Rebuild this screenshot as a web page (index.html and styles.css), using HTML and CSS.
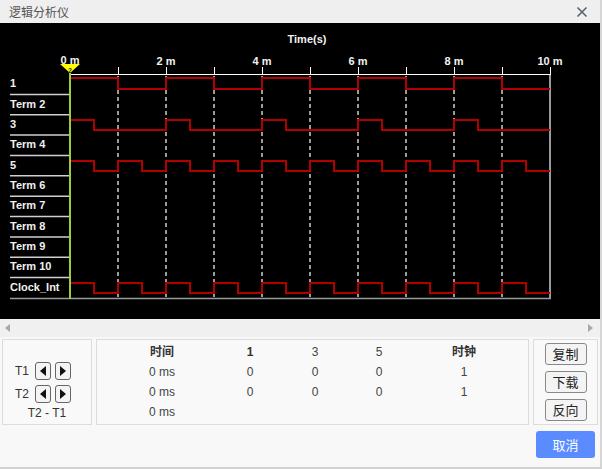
FILE: index.html
```html
<!DOCTYPE html>
<html lang="zh">
<head>
<meta charset="utf-8">
<title>逻辑分析仪</title>
<link rel="stylesheet" href="styles.css">
</head>
<body>
<div class="dialog">
  <div class="titlebar">
    <span class="title">逻辑分析仪</span>
    <svg class="close" width="12" height="12" viewBox="0 0 12 12"><path d="M1.5 1.5 L10.5 10.5 M10.5 1.5 L1.5 10.5" stroke="#5a6470" stroke-width="1.6" fill="none"/></svg>
  </div>
  <div class="scope">
    <svg class="plot" width="600" height="296" viewBox="0 23 600 296">
      <rect x="0" y="23" width="600" height="296" fill="#000"/>
      <g class="axis-text">
        <text x="307" y="43">Time(s)</text>
        <text x="166" y="65">2 m</text>
        <text x="262" y="65">4 m</text>
        <text x="358" y="65">6 m</text>
        <text x="454" y="65">8 m</text>
        <text x="550" y="65">10 m</text>
      </g>
      <line x1="70" y1="74.5" x2="551" y2="74.5" stroke="#fff" stroke-width="1.2"/>
      <g stroke="#fff" stroke-width="1">
        <line x1="118.5" y1="67" x2="118.5" y2="74"/>
        <line x1="166.5" y1="67" x2="166.5" y2="74"/>
        <line x1="214.5" y1="67" x2="214.5" y2="74"/>
        <line x1="262.5" y1="67" x2="262.5" y2="74"/>
        <line x1="310.5" y1="67" x2="310.5" y2="74"/>
        <line x1="358.5" y1="67" x2="358.5" y2="74"/>
        <line x1="406.5" y1="67" x2="406.5" y2="74"/>
        <line x1="454.5" y1="67" x2="454.5" y2="74"/>
        <line x1="502.5" y1="67" x2="502.5" y2="74"/>
        <line x1="550.5" y1="67" x2="550.5" y2="74"/>
      </g>
      <g stroke="#9a9a9a" stroke-width="2" stroke-dasharray="4 3">
        <line x1="118" y1="76" x2="118" y2="297"/>
        <line x1="166" y1="76" x2="166" y2="297"/>
        <line x1="214" y1="76" x2="214" y2="297"/>
        <line x1="262" y1="76" x2="262" y2="297"/>
        <line x1="310" y1="76" x2="310" y2="297"/>
        <line x1="358" y1="76" x2="358" y2="297"/>
        <line x1="406" y1="76" x2="406" y2="297"/>
        <line x1="454" y1="76" x2="454" y2="297"/>
        <line x1="502" y1="76" x2="502" y2="297"/>
      </g>
      <line x1="550" y1="75" x2="550" y2="299" stroke="#9a9a9a" stroke-width="2"/>
      <line x1="10" y1="298.5" x2="551" y2="298.5" stroke="#9a9a9a" stroke-width="1.5"/>
      <g stroke="#d0d0d0" stroke-width="1.5">
        <line x1="10" y1="94.4" x2="69" y2="94.4"/>
        <line x1="10" y1="114.7" x2="69" y2="114.7"/>
        <line x1="10" y1="135.1" x2="69" y2="135.1"/>
        <line x1="10" y1="155.5" x2="69" y2="155.5"/>
        <line x1="10" y1="175.8" x2="69" y2="175.8"/>
        <line x1="10" y1="196.2" x2="69" y2="196.2"/>
        <line x1="10" y1="216.5" x2="69" y2="216.5"/>
        <line x1="10" y1="236.9" x2="69" y2="236.9"/>
        <line x1="10" y1="257.3" x2="69" y2="257.3"/>
        <line x1="10" y1="277.6" x2="69" y2="277.6"/>
      </g>
      <g class="labels">
        <text x="10" y="87">1</text>
        <text x="10" y="107.5">Term 2</text>
        <text x="10" y="128">3</text>
        <text x="10" y="148">Term 4</text>
        <text x="10" y="168.5">5</text>
        <text x="10" y="189">Term 6</text>
        <text x="10" y="209">Term 7</text>
        <text x="10" y="229.5">Term 8</text>
        <text x="10" y="250">Term 9</text>
        <text x="10" y="270">Term 10</text>
        <text x="10" y="290.5">Clock_Int</text>
      </g>
      <g fill="none" stroke="#b00000" stroke-width="2">
        <polyline points="70,78 118,78 118,89 166,89 166,78 214,78 214,89 262,89 262,78 310,78 310,89 358,89 358,78 406,78 406,89 454,89 454,78 502,78 502,89 550,89"/>
        <polyline points="70,120 94,120 94,130 166,130 166,120 190,120 190,130 262,130 262,120 286,120 286,130 358,130 358,120 382,120 382,130 454,130 454,120 478,120 478,130 550,130"/>
        <polyline points="70,161 94,161 94,171 118,171 118,161 142,161 142,171 166,171 166,161 190,161 190,171 214,171 214,161 238,161 238,171 262,171 262,161 286,161 286,171 310,171 310,161 334,161 334,171 358,171 358,161 382,161 382,171 406,171 406,161 430,161 430,171 454,171 454,161 478,161 478,171 502,171 502,161 526,161 526,171 550,171"/>
        <polyline points="70,283 94,283 94,293 118,293 118,283 142,283 142,293 166,293 166,283 190,283 190,293 214,293 214,283 238,283 238,293 262,293 262,283 286,283 286,293 310,293 310,283 334,283 334,293 358,293 358,283 382,283 382,293 406,293 406,283 430,283 430,293 454,293 454,283 478,283 478,293 502,293 502,283 526,283 526,293 550,293"/>
      </g>
      <line x1="70" y1="73" x2="70" y2="299" stroke="#9ccc3c" stroke-width="2"/>
      <polygon points="60,64 80,64 70,73" fill="#ffff00"/>
      <text class="marker" x="70" y="72.5">2</text>
      <text class="axis-text-0" x="70" y="64">0 m</text>
    </svg>
  </div>
  <div class="hscroll">
    <svg width="6" height="8" viewBox="0 0 6 8"><polygon points="5,0 5,8 0,4" fill="#a8a8a8"/></svg>
    <svg width="6" height="8" viewBox="0 0 6 8"><polygon points="0,0 0,8 5,4" fill="#a8a8a8"/></svg>
  </div>
  <div class="panel">
    <div class="box cursors">
      <div class="crow">
        <span class="clabel">T1</span>
        <span class="arrow"><svg width="6" height="10" viewBox="0 0 6 10"><polygon points="6,0 6,10 0,5" fill="#111"/></svg></span>
        <span class="arrow"><svg width="6" height="10" viewBox="0 0 6 10"><polygon points="0,0 0,10 6,5" fill="#111"/></svg></span>
      </div>
      <div class="crow">
        <span class="clabel">T2</span>
        <span class="arrow"><svg width="6" height="10" viewBox="0 0 6 10"><polygon points="6,0 6,10 0,5" fill="#111"/></svg></span>
        <span class="arrow"><svg width="6" height="10" viewBox="0 0 6 10"><polygon points="0,0 0,10 6,5" fill="#111"/></svg></span>
      </div>
      <div class="diff">T2 - T1</div>
    </div>
    <div class="box readout">
      <span class="hd">时间</span><span class="hd">1</span><span>3</span><span>5</span><span class="hd">时钟</span>
      <span>0 ms</span><span>0</span><span>0</span><span>0</span><span>1</span>
      <span>0 ms</span><span>0</span><span>0</span><span>0</span><span>1</span>
      <span>0 ms</span><span></span><span></span><span></span><span></span>
    </div>
    <div class="box actions">
      <button class="btn">复制</button>
      <button class="btn">下载</button>
      <button class="btn">反向</button>
    </div>
  </div>
  <div class="footer">
    <button class="primary">取消</button>
  </div>
</div>
</body>
</html>
```

FILE: styles.css
```css
* { box-sizing: border-box; }
html, body { margin: 0; padding: 0; }
body {
  width: 602px;
  height: 469px;
  overflow: hidden;
  font-family: "Liberation Sans", Arial, "Noto Sans CJK SC", sans-serif;
  background: #f8f8f8;
}
.dialog {
  width: 602px;
  height: 469px;
  border-right: 2px solid #d6d6d6;
  border-bottom: 2px solid #d0d0d0;
  background: #f8f8f8;
  display: flex;
  flex-direction: column;
}
.titlebar {
  height: 23px;
  background: #efefef;
  display: flex;
  align-items: center;
  justify-content: space-between;
  padding: 0 12px 0 9px;
}
.title {
  font-family: "Noto Sans CJK SC", sans-serif;
  font-size: 12px;
  color: #555;
}
.close { display: block; }
.scope {
  height: 296px;
  background: #000;
}
.plot { display: block; }
.axis-text text, .axis-text-0 {
  font-family: "Liberation Sans", Arial, sans-serif;
  font-size: 11px;
  font-weight: bold;
  fill: #f2f2f2;
  text-anchor: middle;
}
.labels text {
  font-family: "Liberation Sans", Arial, sans-serif;
  font-size: 11px;
  font-weight: bold;
  fill: #f0f0f0;
}
.marker {
  font-family: "Liberation Sans", Arial, sans-serif;
  font-size: 7px;
  font-weight: bold;
  fill: #333;
  text-anchor: middle;
}
.hscroll {
  height: 18px;
  background: #f0f0f0;
  display: flex;
  align-items: center;
  justify-content: space-between;
  padding: 0 6px 0 5px;
}
.hscroll svg { display: block; }
.panel {
  display: flex;
  gap: 4px;
  padding: 2px 2px 0 2px;
  height: 88px;
}
.box {
  border: 1px solid #dcdcdc;
  background: #f9f9f9;
  height: 86px;
}
.cursors {
  width: 90px;
  display: flex;
  flex-direction: column;
  padding-top: 22px;
}
.crow {
  display: flex;
  align-items: center;
  gap: 4px;
  height: 18px;
  padding-left: 12px;
  margin-bottom: 5px;
}
.crow:nth-child(2) { margin-bottom: 3px; }
.clabel {
  font-size: 12px;
  color: #333;
  width: 16px;
}
.arrow {
  width: 16px;
  height: 18px;
  border: 1px solid #666;
  border-radius: 3px;
  background: #f4f4f4;
  display: flex;
  align-items: center;
  justify-content: center;
}
.arrow svg { display: block; }
.diff {
  font-size: 12px;
  color: #333;
  text-align: center;
  line-height: 14px;
}
.readout {
  width: 433px;
  display: grid;
  grid-template-columns: 130px 46px 84px 44px 126px;
  grid-auto-rows: 20px;
  padding-top: 2px;
  font-size: 12px;
  color: #444;
}
.readout span {
  text-align: center;
  line-height: 20px;
  font-family: "Liberation Sans", Arial, "Noto Sans CJK SC", sans-serif;
}
.readout .hd { font-weight: bold; color: #333; }
.actions {
  width: 65px;
  display: flex;
  flex-direction: column;
  align-items: center;
  padding-top: 3px;
  gap: 6px;
}
.btn {
  width: 42px;
  height: 22px;
  border: 1px solid #888;
  border-radius: 3px;
  background: #f4f4f4;
  font-family: "Noto Sans CJK SC", sans-serif;
  font-size: 13px;
  color: #222;
  padding: 0;
  line-height: 20px;
}
.footer {
  flex: 1;
  display: flex;
  justify-content: flex-end;
  align-items: flex-start;
  padding: 6px 5px 0 0;
}
.primary {
  width: 59px;
  height: 27px;
  border: none;
  border-radius: 3px;
  background: #5a8cff;
  color: #fff;
  font-family: "Noto Sans CJK SC", sans-serif;
  font-size: 13px;
  padding: 0;
}
```
